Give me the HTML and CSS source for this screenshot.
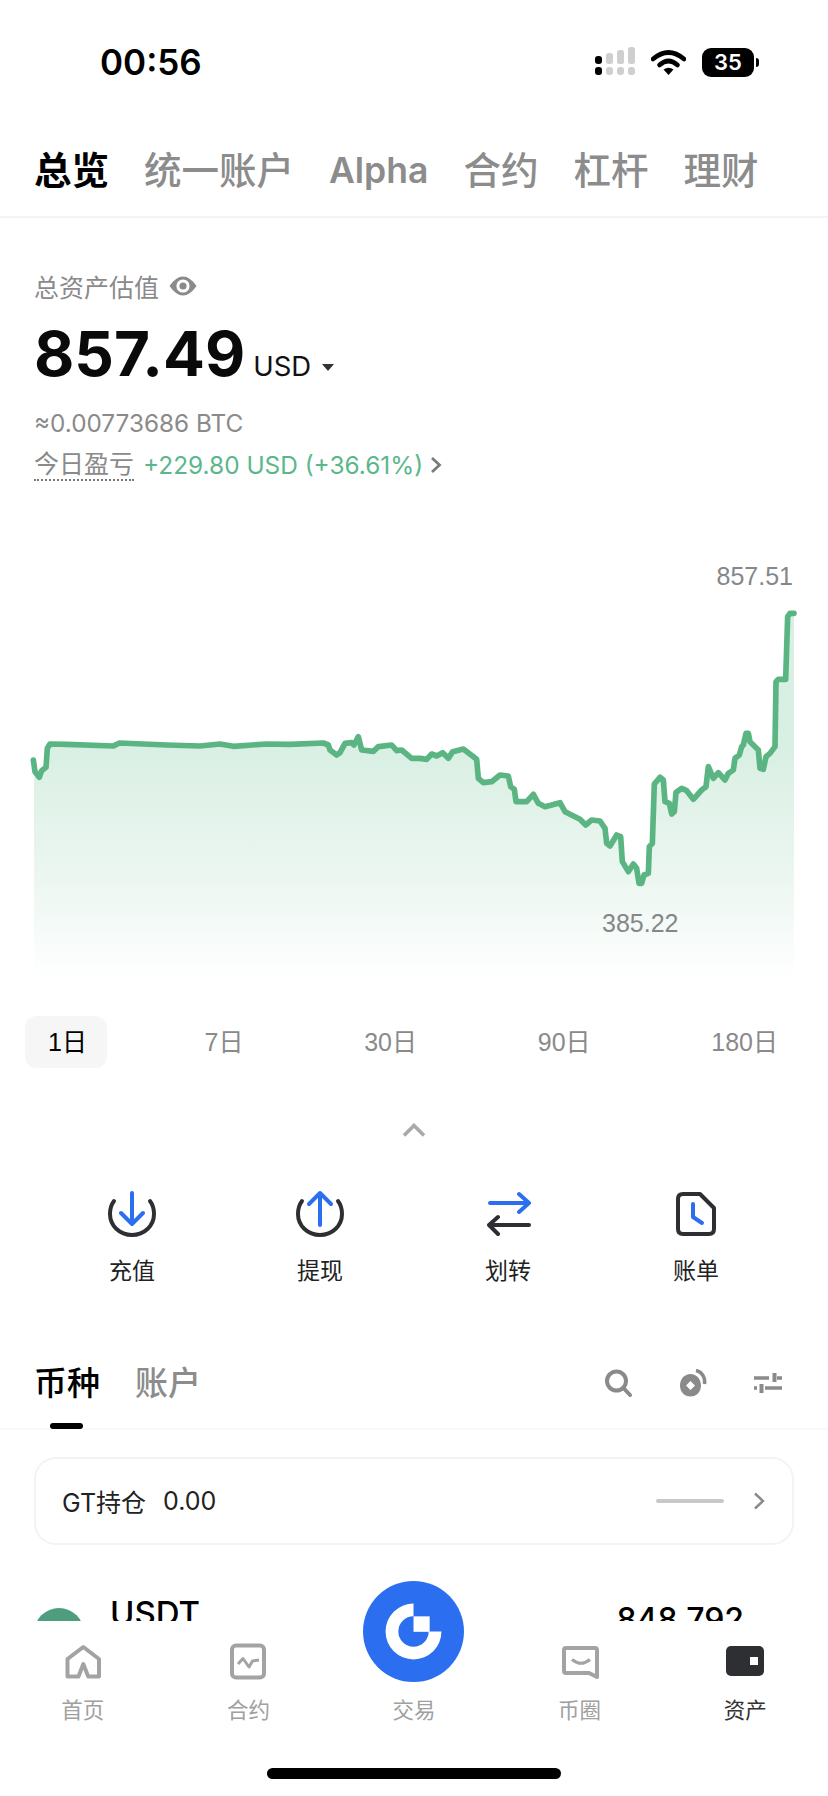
FILE: index.html
```html
<!DOCTYPE html>
<html lang="zh-CN">
<head>
    <meta charset="UTF-8">
    <meta name="viewport" content="width=device-width, initial-scale=1.0">
    <title>总览</title>
    <link rel="stylesheet" href="styles.css">
</head>
<body>
<div class="page">
    <!-- Status bar -->
    <div class="status">
        <span class="time">00:56</span>
        <div class="status-icons">
            <svg class="signal" width="40" height="30" viewBox="0 0 40 30">
                <rect x="0" y="9" width="7" height="8" rx="3" fill="#000"/>
                <rect x="0" y="20" width="7" height="8" rx="3" fill="#000"/>
                <g fill="#cfcfcf">
                    <rect x="11" y="6" width="7" height="11" rx="2.5"/>
                    <rect x="22" y="3" width="7" height="14" rx="2.5"/>
                    <rect x="33" y="0" width="7" height="17" rx="2.5"/>
                    <rect x="11" y="20" width="7" height="8" rx="3"/>
                    <rect x="22" y="20" width="7" height="8" rx="3"/>
                    <rect x="33" y="20" width="7" height="8" rx="3"/>
                </g>
            </svg>
            <svg class="wifi" width="35" height="26" viewBox="0 0 35 26">
                <path d="M2 10 Q17.5 -3 33 10" fill="none" stroke="#000" stroke-width="4.6" stroke-linecap="round"/>
                <path d="M8.5 16 Q17.5 8 26.5 16" fill="none" stroke="#000" stroke-width="4.6" stroke-linecap="round"/>
                <path d="M12.5 20.5 Q17.5 17 22.5 20.5 L17.5 26 Z" fill="#000"/>
            </svg>
            <div class="battery">35</div>
        </div>
    </div>

    <!-- Top tabs -->
    <nav class="top-tabs">
        <a class="active">总览</a>
        <a>统一账户</a>
        <a class="latin">Alpha</a>
        <a>合约</a>
        <a>杠杆</a>
        <a>理财</a>
    </nav>

    <!-- Balance -->
    <section class="balance">
        <div class="balance-label">
            <span>总资产估值</span>
            <svg width="28" height="20" viewBox="0 0 28 20">
                <path d="M0.5 10 Q7 0.5 14 0.5 Q21 0.5 27.5 10 Q21 19.5 14 19.5 Q7 19.5 0.5 10 Z" fill="#8a8a8a"/>
                <circle cx="14" cy="10" r="6.6" fill="#fff"/>
                <circle cx="14" cy="10" r="3.6" fill="#8a8a8a"/>
            </svg>
        </div>
        <div class="amount">
            <span class="amount-num">857.49</span>
            <span class="amount-unit">USD</span>
            <span class="caret"></span>
        </div>
        <div class="btc">≈0.00773686 BTC</div>
        <div class="pnl">
            <span class="pnl-label">今日盈亏</span>
            <span class="pnl-value">+229.80 USD (+36.61%)</span>
            <svg width="12" height="18" viewBox="0 0 12 18">
                <path d="M2 2 L9.5 9 L2 16" fill="none" stroke="#7b7b7b" stroke-width="2.8"/>
            </svg>
        </div>
    </section>

    <!-- Chart -->
    <div class="chart">
        <span class="chart-max">857.51</span>
        <span class="chart-min">385.22</span>
        <svg width="828" height="420" viewBox="0 0 2484 1260">
            <defs>
                <linearGradient id="chartFill" gradientUnits="userSpaceOnUse" x1="0" y1="540" x2="0" y2="1260">
                    <stop offset="0" stop-color="#d8efe3"/>
                    <stop offset="0.55" stop-color="#ebf6f0"/>
                    <stop offset="1" stop-color="#ffffff"/>
                </linearGradient>
            </defs>
            <path fill="url(#chartFill)" d="M102 650 L118 652 125 632 138 622 142 565 150 552 200 553 340 558 358 549 500 555 600 558 660 552 700 559 800 552 870 553 970 549 985 555 990 570 1010 585 1020 578 1035 550 1055 548 1062 555 1075 530 1085 570 1120 574 1135 560 1175 555 1190 572 1205 570 1235 595 1260 595 1280 598 1295 582 1310 588 1328 578 1345 595 1358 575 1390 567 1430 598 1435 655 1450 668 1475 665 1500 645 1525 648 1532 680 1543 688 1548 725 1580 725 1600 703 1615 730 1635 740 1655 735 1680 728 1695 755 1740 778 1757 795 1775 780 1800 783 1815 805 1820 850 1830 858 1850 825 1862 830 1867 905 1885 935 1900 912 1910 925 1917 970 1925 970 1932 945 1945 940 1948 860 1957 850 1963 672 1980 652 1990 660 1995 725 2008 730 2015 762 2023 755 2028 697 2045 685 2060 692 2080 718 2105 690 2118 680 2125 620 2140 655 2155 638 2175 660 2185 640 2200 630 2205 595 2218 585 2225 560 2230 555 2238 520 2245 520 2250 545 2275 570 2280 625 2290 628 2298 590 2310 580 2325 560 2328 365 2335 358 2357 358 2363 170 2370 160 2382 160 L2382 1260 L102 1260 Z"/>
            <path fill="none" stroke="#5bb583" stroke-width="17" stroke-linejoin="round" stroke-linecap="round" d="M100 600 L105 635 118 652 125 632 138 622 142 565 150 552 200 553 340 558 358 549 500 555 600 558 660 552 700 559 800 552 870 553 970 549 985 555 990 570 1010 585 1020 578 1035 550 1055 548 1062 555 1075 530 1085 570 1120 574 1135 560 1175 555 1190 572 1205 570 1235 595 1260 595 1280 598 1295 582 1310 588 1328 578 1345 595 1358 575 1390 567 1430 598 1435 655 1450 668 1475 665 1500 645 1525 648 1532 680 1543 688 1548 725 1580 725 1600 703 1615 730 1635 740 1655 735 1680 728 1695 755 1740 778 1757 795 1775 780 1800 783 1815 805 1820 850 1830 858 1850 825 1862 830 1867 905 1885 935 1900 912 1910 925 1917 970 1925 970 1932 945 1945 940 1948 860 1957 850 1963 672 1980 652 1990 660 1995 725 2008 730 2015 762 2023 755 2028 697 2045 685 2060 692 2080 718 2105 690 2118 680 2125 620 2140 655 2155 638 2175 660 2185 640 2200 630 2205 595 2218 585 2225 560 2230 555 2238 520 2245 520 2250 545 2275 570 2280 625 2290 628 2298 590 2310 580 2325 560 2328 365 2335 358 2357 358 2363 170 2370 160 2382 160"/>
        </svg>
    </div>

    <!-- Time range -->
    <div class="ranges">
        <span class="range active">1日</span>
        <span class="range">7日</span>
        <span class="range">30日</span>
        <span class="range">90日</span>
        <span class="range">180日</span>
    </div>

    <svg class="collapse" width="24" height="14" viewBox="0 0 24 14">
        <path d="M2 12.5 L12 2.5 L22 12.5" fill="none" stroke="#a9a9a9" stroke-width="3.6"/>
    </svg>

    <!-- Actions -->
    <div class="actions">
        <div class="action">
            <svg width="56" height="56" viewBox="0 0 56 56" fill="none" stroke-width="4">
                <path stroke="#2e2f33" stroke-linecap="round" d="M10 14 C7 18 6 23 6 27 C6 39 16 48 28 48 C40 48 50 39 50 27 C50 23 49 18 46 14"/>
                <path stroke="#2b6ff0" stroke-linecap="round" stroke-linejoin="round" d="M28 6 V37 M17 26 L28 37 L39 26"/>
            </svg>
            <span>充值</span>
        </div>
        <div class="action">
            <svg width="56" height="56" viewBox="0 0 56 56" fill="none" stroke-width="4">
                <path stroke="#2e2f33" stroke-linecap="round" d="M10 14 C7 18 6 23 6 27 C6 39 16 48 28 48 C40 48 50 39 50 27 C50 23 49 18 46 14"/>
                <path stroke="#2b6ff0" stroke-linecap="round" stroke-linejoin="round" d="M28 38 V6 M17 17 L28 6 L39 17"/>
            </svg>
            <span>提现</span>
        </div>
        <div class="action">
            <svg width="56" height="56" viewBox="0 0 56 56" fill="none" stroke-width="4" stroke-linecap="round" stroke-linejoin="round">
                <path stroke="#2b6ff0" d="M10 16 H49 M39 7 L49 16 L39 25"/>
                <path stroke="#2e2f33" d="M49 38 H9 M18 30 L9 38 L18 47"/>
            </svg>
            <span>划转</span>
        </div>
        <div class="action">
            <svg width="56" height="56" viewBox="0 0 56 56" fill="none" stroke-width="4" stroke-linecap="round" stroke-linejoin="round">
                <path stroke="#2e2f33" d="M15 7 H32 L46 21 V42 Q46 47 41 47 H15 Q10 47 10 42 V12 Q10 7 15 7 Z"/>
                <path stroke="#2b6ff0" d="M25 17 V30 L34 36"/>
            </svg>
            <span>账单</span>
        </div>
    </div>

    <!-- Assets -->
    <div class="asset-head">
        <a class="asset-tab active">币种</a>
        <a class="asset-tab">账户</a>
        <div class="asset-tools">
            <svg width="28" height="28" viewBox="0 0 28 28" fill="none" stroke="#8a8a8a" stroke-width="4">
                <circle cx="12.5" cy="12" r="9.5"/>
                <path d="M19.5 19 L26 26" stroke-linecap="round"/>
            </svg>
            <svg width="28" height="28" viewBox="0 0 28 28">
                <path d="M11.5 5 C17.5 5 22 10 22 16.5 C22 23 17.5 27.5 11.5 27.5 C5.5 27.5 1 23 1 16.5 C1 10 5.5 5 11.5 5 Z M11.5 12 L7 16.5 L11.5 21 L16 16.5 Z" fill="#8a8a8a" fill-rule="evenodd"/>
                <path d="M17 1.5 C22.5 2.5 26.5 8 25.5 15" fill="none" stroke="#8a8a8a" stroke-width="3.6"/>
            </svg>
            <svg width="28" height="22" viewBox="0 0 28 22" fill="none" stroke="#8a8a8a" stroke-width="3.6">
                <path d="M0 6 H15 M23 6 H28 M0 16 H3 M11 16 H28"/>
                <path d="M20.5 1 V10 M7.5 12 V21" stroke-width="4"/>
            </svg>
        </div>
    </div>

    <div class="gt-card">
        <span class="gt-name">GT持仓</span>
        <span class="gt-value">0.00</span>
        <span class="gt-line"></span>
        <svg width="13" height="18" viewBox="0 0 13 18">
            <path d="M2 1.5 L10 9 L2 16.5" fill="none" stroke="#8a8a8a" stroke-width="2.4"/>
        </svg>
    </div>

    <div class="coin-row">
        <span class="coin-logo"></span>
        <span class="coin-name">USDT</span>
        <span class="coin-value">848.792</span>
    </div>

    <!-- Bottom tab bar -->
    <div class="tabbar">
        <a class="tab-btn">
            <svg width="40" height="40" viewBox="0 0 40 40" fill="none" stroke="#a3a3a3" stroke-width="4" stroke-linejoin="round">
                <path d="M20.3 5 L4.5 17 V34.5 H15.5 L20.3 22 L25.2 34.5 H36 V17 Z"/>
            </svg>
            <span>首页</span>
        </a>
        <a class="tab-btn">
            <svg width="40" height="40" viewBox="0 0 40 40" fill="none" stroke="#a3a3a3" stroke-width="4" stroke-linejoin="round">
                <rect x="4" y="3.5" width="32" height="32" rx="4"/>
                <path d="M10 22 L15 16.5 L21 25 L24.5 19 L31 18" stroke-width="3"/>
            </svg>
            <span>合约</span>
        </a>
        <a class="tab-btn tab-trade">
            <span>交易</span>
        </a>
        <a class="tab-btn">
            <svg width="40" height="40" viewBox="0 0 40 40" fill="none" stroke="#a3a3a3" stroke-width="4" stroke-linejoin="round">
                <path d="M6 6 H35 Q37 6 37 8 V35 L29 31 H6 Q4 31 4 29 V8 Q4 6 6 6 Z"/>
                <path d="M12 17.5 Q21 25 30 17.5" stroke-width="3"/>
            </svg>
            <span>币圈</span>
        </a>
        <a class="tab-btn current">
            <svg width="40" height="40" viewBox="0 0 40 40">
                <rect x="1" y="4" width="38" height="30" rx="5" fill="#2e2f33"/>
                <rect x="25" y="15" width="8" height="8" fill="#fff"/>
            </svg>
            <span>资产</span>
        </a>
        <div class="home-bar"></div>
    </div>

    <!-- Center button sits over the tab bar edge -->
    <div class="trade-btn">
        <svg width="101" height="101" viewBox="40 33 300 300">
            <circle cx="190" cy="183" r="150" fill="#2b6ff0"/>
            <path fill="#fff" d="M190 100 A83 83 0 1 0 273 183 H235 A45 45 0 1 1 190 138 Z"/>
            <path fill="#fff" d="M190 138 H238 V184 H190 Z"/>
        </svg>
    </div>
</div>
</body>
</html>
```

FILE: styles.css
```css
* {
    box-sizing: border-box;
}
html, body {
    margin: 0;
    padding: 0;
    background-color: #fff;
}
body {
    font-family: Inter, "Noto Sans CJK SC", sans-serif;
    color: #000;
}
.page {
    position: relative;
    width: 828px;
    height: 1796px;
    overflow: hidden;
    background-color: #fff;
}

/* Status bar */
.status {
    display: flex;
    align-items: center;
    justify-content: space-between;
    height: 124px;
    padding: 0 69px 0 100px;
}
.time {
    font-size: 35px;
    font-weight: 600;
}
.status-icons {
    display: flex;
    align-items: center;
    gap: 16px;
}
.battery {
    position: relative;
    width: 52px;
    height: 29px;
    margin-right: 5px;
    background-color: #000;
    border-radius: 9px;
    color: #fff;
    font-size: 22px;
    font-weight: 600;
    line-height: 29px;
    text-align: center;
}
.battery::after {
    content: "";
    position: absolute;
    top: 10px;
    right: -5px;
    width: 3px;
    height: 9px;
    background-color: #000;
    border-radius: 0 3px 3px 0;
}

/* Top tabs */
.top-tabs {
    display: flex;
    align-items: center;
    gap: 35px;
    height: 94px;
    padding: 0 34px 6px;
    border-bottom: 2px solid #f4f4f4;
    font-size: 37.5px;
    font-weight: 500;
    color: #8c8c8c;
}
.top-tabs a {
    white-space: nowrap;
}
.top-tabs .latin {
    margin-top: 6px;
    font-size: 35.5px;
    font-weight: 600;
}
.top-tabs .active {
    font-weight: 700;
    color: #000;
}

/* Balance */
.balance {
    height: 342px;
    padding: 50px 34px 0;
}
.balance-label {
    display: flex;
    align-items: center;
    gap: 10px;
    height: 36px;
    font-size: 25px;
    color: #8a8a8a;
}
.amount {
    display: flex;
    align-items: baseline;
    height: 72px;
    margin-top: 14px;
    line-height: 72px;
}
.amount-num {
    font-size: 62px;
    font-weight: 700;
    color: #0a0a0a;
}
.amount-unit {
    margin-left: 8px;
    font-size: 27.5px;
    color: #111;
}
.caret {
    width: 0;
    height: 0;
    margin-left: 11px;
    border-left: 6px solid transparent;
    border-right: 6px solid transparent;
    border-top: 7px solid #333;
    transform: translateY(-5px);
}
.btc {
    height: 36px;
    margin-top: 15px;
    font-size: 24.3px;
    line-height: 36px;
    color: #8a8a8a;
}
.pnl {
    display: flex;
    align-items: center;
    height: 36px;
    margin-top: 6px;
    font-size: 24.4px;
}
.pnl-label {
    border-bottom: 2px dotted #777;
    font-size: 25px;
    line-height: 30px;
    color: #8a8a8a;
}
.pnl-value {
    margin-left: 9px;
    margin-right: 7px;
    color: #5bb78a;
    white-space: nowrap;
}

/* Chart */
.chart {
    position: relative;
    height: 420px;
}
.chart svg {
    display: block;
}
.chart-max,
.chart-min {
    position: absolute;
    font-family: "Liberation Sans", sans-serif;
    font-size: 25px;
    line-height: 30px;
    color: #85878a;
}
.chart-max {
    top: 1px;
    right: 35px;
}
.chart-min {
    top: 348px;
    left: 602px;
}

/* Time range */
.ranges {
    display: flex;
    justify-content: space-between;
    margin-top: 36px;
    padding: 0 27px 0 25px;
    font-family: "Liberation Sans", "Noto Sans CJK SC", sans-serif;
}
.range {
    height: 52px;
    padding: 0 23px;
    border-radius: 12px;
    font-size: 25px;
    line-height: 52px;
    color: #8a8a8a;
}
.range.active {
    padding-right: 20px;
    background-color: #f6f6f6;
    color: #000;
}
.collapse {
    display: block;
    margin: 55px auto 0;
}

/* Actions */
.actions {
    display: grid;
    grid-template-columns: repeat(4, 1fr);
    margin-top: 50px;
    padding: 0 38px;
}
.action {
    display: flex;
    flex-direction: column;
    align-items: center;
    gap: 11px;
    font-size: 23px;
    line-height: 34px;
    color: #222;
}
.action svg {
    display: block;
}

/* Assets */
.asset-head {
    display: flex;
    align-items: flex-start;
    gap: 35px;
    height: 90px;
    margin-top: 52px;
    padding: 21px 46px 0 34px;
    border-bottom: 2px solid #f9f9f9;
    font-size: 33px;
    font-weight: 500;
    line-height: 44px;
    color: #8c8c8c;
}
.asset-tab {
    position: relative;
}
.asset-tab.active {
    color: #000;
}
.asset-tab.active::after {
    content: "";
    position: absolute;
    left: 16px;
    bottom: -24px;
    width: 33px;
    height: 6px;
    background-color: #000;
    border-radius: 3px;
}
.asset-tools {
    display: flex;
    align-items: center;
    gap: 47px;
    height: 44px;
    margin-left: auto;
}
.gt-card {
    display: flex;
    align-items: center;
    height: 88px;
    margin: 27px 34px 0;
    padding: 0 26px 0 26px;
    border: 2px solid #f3f3f3;
    border-radius: 22px;
    font-size: 25px;
    color: #222;
}
.gt-value {
    margin-left: 17px;
}
.gt-line {
    width: 68px;
    height: 4px;
    margin-left: auto;
    margin-right: 29px;
    background-color: #c8c8c8;
    border-radius: 2px;
}
.coin-row {
    display: flex;
    margin-top: 48px;
    padding: 0 84px 0 34px;
    font-size: 33px;
    font-weight: 500;
    line-height: 40px;
}
.coin-logo {
    width: 50px;
    height: 50px;
    margin-top: 15px;
    background-color: #4f9d7f;
    border-radius: 50%;
}
.coin-name {
    margin-left: 26px;
}
.coin-value {
    margin-left: auto;
    margin-top: 7px;
    font-size: 32px;
}

/* Bottom tab bar */
.tabbar {
    position: absolute;
    left: 0;
    right: 0;
    bottom: 0;
    display: grid;
    grid-template-columns: repeat(5, 1fr);
    align-items: start;
    height: 175px;
    padding-top: 21px;
    background-color: #fff;
}
.tab-btn {
    display: flex;
    flex-direction: column;
    align-items: center;
    gap: 10px;
    font-size: 21.5px;
    line-height: 36px;
    color: #a0a0a0;
}
.tab-btn svg {
    display: block;
}
.tab-btn.current {
    color: #333;
}
.tab-trade {
    padding-top: 50px;
}
.home-bar {
    position: absolute;
    left: 267px;
    bottom: 17px;
    width: 294px;
    height: 11px;
    background-color: #000;
    border-radius: 6px;
}
.trade-btn {
    position: absolute;
    top: 1581px;
    left: 363px;
    width: 101px;
    height: 101px;
}
.trade-btn svg {
    display: block;
}
```
